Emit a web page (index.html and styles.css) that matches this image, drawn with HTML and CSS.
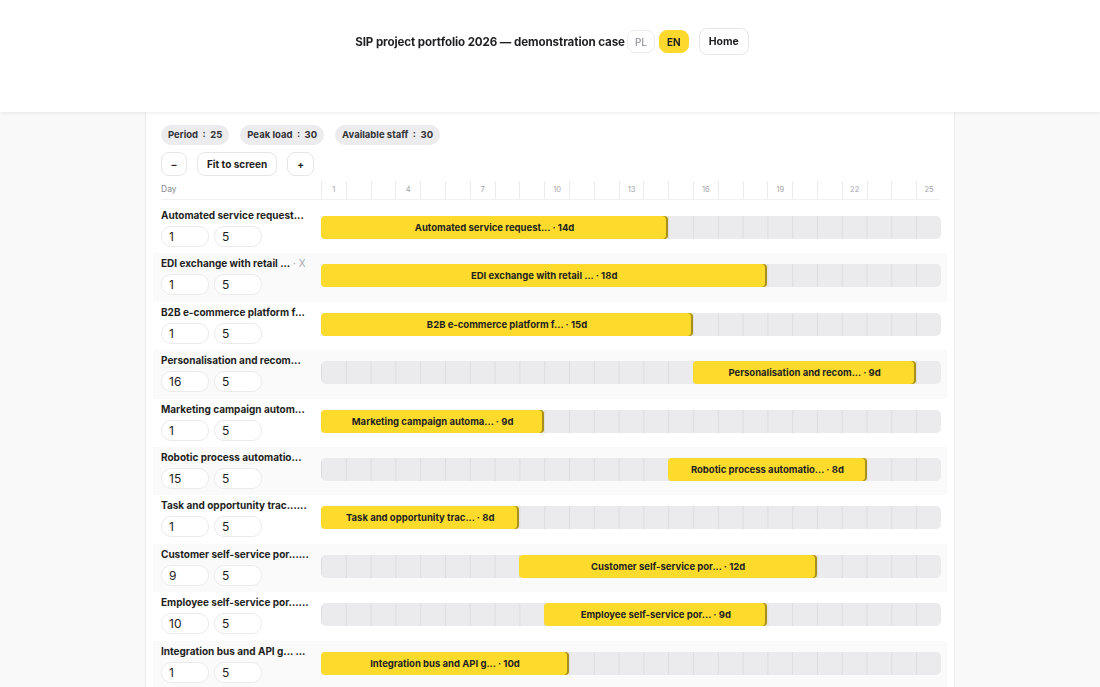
FILE: index.html
```html
<!DOCTYPE html>
<html lang="en">
<head>
    <meta charset="UTF-8">
    <meta name="viewport" content="width=device-width, initial-scale=1.0">
    <title>SIP project portfolio 2026</title>
    <link rel="stylesheet" href="styles.css">
</head>
<body>
    <header class="topbar">
        <div class="topbar-row">
            <h1>SIP project portfolio 2026 — demonstration case</h1>
            <div class="lang">
                <button class="lang-btn">PL</button>
                <button class="lang-btn active">EN</button>
            </div>
            <button class="home-btn">Home</button>
        </div>
    </header>

    <main class="card">
        <div class="stats">
            <span class="stat">Period&nbsp; : &nbsp;25</span>
            <span class="stat">Peak load&nbsp; : &nbsp;30</span>
            <span class="stat">Available staff&nbsp; : &nbsp;30</span>
        </div>

        <div class="zoom">
            <button class="zoom-btn">–</button>
            <button class="zoom-btn">Fit to screen</button>
            <button class="zoom-btn">+</button>
        </div>

        <div class="gantt">
            <div class="gantt-head">
                <div class="day-label">Day</div>
                <div class="days" id="days"></div>
            </div>
            <div id="rows"></div>
        </div>
    </main>

    <script>
        const PERIOD = 25;

        const projects = [
            { name: 'Automated service request...', bar: 'Automated service request...', start: 1, length: 14 },
            { name: 'EDI exchange with retail ...', bar: 'EDI exchange with retail ...', start: 1, length: 18, removable: true },
            { name: 'B2B e-commerce platform f...', bar: 'B2B e-commerce platform f...', start: 1, length: 15 },
            { name: 'Personalisation and recom...', bar: 'Personalisation and recom...', start: 16, length: 9 },
            { name: 'Marketing campaign autom...', bar: 'Marketing campaign automa...', start: 1, length: 9 },
            { name: 'Robotic process automatio...', bar: 'Robotic process automatio...', start: 15, length: 8 },
            { name: 'Task and opportunity trac......', bar: 'Task and opportunity trac...', start: 1, length: 8 },
            { name: 'Customer self-service por......', bar: 'Customer self-service por...', start: 9, length: 12 },
            { name: 'Employee self-service por......', bar: 'Employee self-service por...', start: 10, length: 9 },
            { name: 'Integration bus and API g... ...', bar: 'Integration bus and API g...', start: 1, length: 10 }
        ];

        function renderDays() {
            let html = '';
            for (let d = 1; d <= PERIOD; d++) {
                const label = (d - 1) % 3 === 0 ? d : '';
                html += `<span class="day">${label}</span>`;
            }
            document.getElementById('days').innerHTML = html;
        }

        function renderRows() {
            document.getElementById('rows').innerHTML = projects.map(p => `
                <div class="row">
                    <div class="row-info">
                        <div class="row-name">${p.name}${p.removable ? '<span class="remove"> · X</span>' : ''}</div>
                        <div class="row-inputs">
                            <input type="text" value="${p.start}">
                            <input type="text" value="5">
                        </div>
                    </div>
                    <div class="track">
                        <div class="bar" style="grid-column: ${p.start} / span ${p.length}">${p.bar} · ${p.length}d</div>
                    </div>
                </div>
            `).join('');
        }

        renderDays();
        renderRows();
    </script>
</body>
</html>
```

FILE: styles.css
```css
* {
    margin: 0;
    padding: 0;
    box-sizing: border-box;
    font-family: Inter, "Noto Sans", sans-serif;
}

body {
    background-color: #f9f9fa;
    color: #1f1f22;
}

button {
    font-family: inherit;
    cursor: pointer;
}

/* sticky top bar */
.topbar {
    position: fixed;
    top: 0;
    left: 0;
    right: 0;
    height: 112px;
    background-color: #fff;
    box-shadow: 0 1px 4px rgba(0,0,0,0.08);
    z-index: 10;
}

.topbar-row {
    display: flex;
    align-items: center;
    justify-content: center;
    margin-top: 28px;
    height: 27px;
    padding-left: 4px;
}

.topbar h1 {
    font-size: 11.6px;
    font-weight: 700;
    color: #1f1f22;
    letter-spacing: -0.1px;
}

.lang {
    display: flex;
    gap: 4px;
    margin-left: 2px;
}

.lang-btn {
    height: 23px;
    padding: 0 7px;
    border: 1px solid #ececee;
    border-radius: 8px;
    background-color: #fff;
    color: #a0a0a6;
    font-size: 10px;
    font-weight: 600;
}

.lang-btn.active {
    background-color: #fdd92e;
    border-color: #fdd92e;
    color: #1f1f22;
    font-weight: 700;
}

.home-btn {
    height: 27px;
    margin-left: 10px;
    padding: 0 9px;
    border: 1px solid #e6e6e9;
    border-radius: 8px;
    background-color: #fff;
    color: #1f1f22;
    font-size: 10.5px;
    font-weight: 700;
}

/* main card */
.card {
    width: 810px;
    margin: 100px auto 0;
    padding: 25px 15px 20px;
    background-color: #fff;
    border-left: 1px solid #ececef;
    border-right: 1px solid #ececef;
    min-height: 700px;
}

.stats {
    display: flex;
    gap: 11px;
}

.stat {
    height: 20px;
    line-height: 20px;
    padding: 0 7px;
    border-radius: 10px;
    background-color: #ececee;
    font-size: 9.5px;
    font-weight: 700;
    color: #333338;
}

.zoom {
    display: flex;
    gap: 10px;
    margin-top: 7px;
}

.zoom-btn {
    min-width: 26px;
    height: 24px;
    padding: 0 9px;
    border: 1px solid #e6e6e9;
    border-radius: 8px;
    background-color: #fff;
    color: #1f1f22;
    font-size: 10px;
    font-weight: 700;
}

/* gantt chart */
.gantt {
    margin-top: 5px;
}

.gantt-head {
    display: grid;
    grid-template-columns: 160px 620px;
    height: 19px;
    border-bottom: 1px solid #f0f0f2;
    margin-bottom: 5px;
}

.day-label {
    font-size: 8.5px;
    color: #8a8a90;
    line-height: 17px;
}

.days {
    display: grid;
    grid-template-columns: repeat(25, 1fr);
}

.day {
    border-left: 1px solid #ececef;
    font-size: 7.5px;
    color: #a4a4aa;
    text-align: center;
    line-height: 17px;
}

.row {
    display: grid;
    grid-template-columns: 160px 620px;
    height: 48.4px;
    margin: 0 -8px;
    padding: 0 8px;
}

.row:nth-child(even) {
    background-color: #fafafb;
}

.row-info {
    padding-top: 3px;
}

.row-name {
    font-size: 10px;
    font-weight: 700;
    color: #1f1f22;
    line-height: 15px;
    white-space: nowrap;
}

.remove {
    color: #a8a8ae;
    font-weight: 400;
}

.row-inputs {
    display: flex;
    gap: 5px;
    margin-top: 3px;
}

.row-inputs input {
    width: 48px;
    height: 21px;
    padding: 0 7px;
    border: 1px solid #ebebee;
    border-radius: 10px;
    font-size: 12px;
    color: #222;
    background-color: #fff;
}

.track {
    display: grid;
    grid-template-columns: repeat(25, 1fr);
    align-self: start;
    margin-top: 11px;
    height: 23px;
    border-radius: 5px;
    background-color: #ebebed;
    background-image: linear-gradient(to right, #dddde0 1px, transparent 1px);
    background-size: 4% 100%;
}

.bar {
    grid-row: 1;
    border-radius: 4px;
    background-color: #fddb2c;
    box-shadow: inset -2px 0 0 #a8901a;
    font-size: 9.5px;
    font-weight: 700;
    color: #1f1f22;
    text-align: center;
    line-height: 23px;
    white-space: nowrap;
    overflow: hidden;
}
```
